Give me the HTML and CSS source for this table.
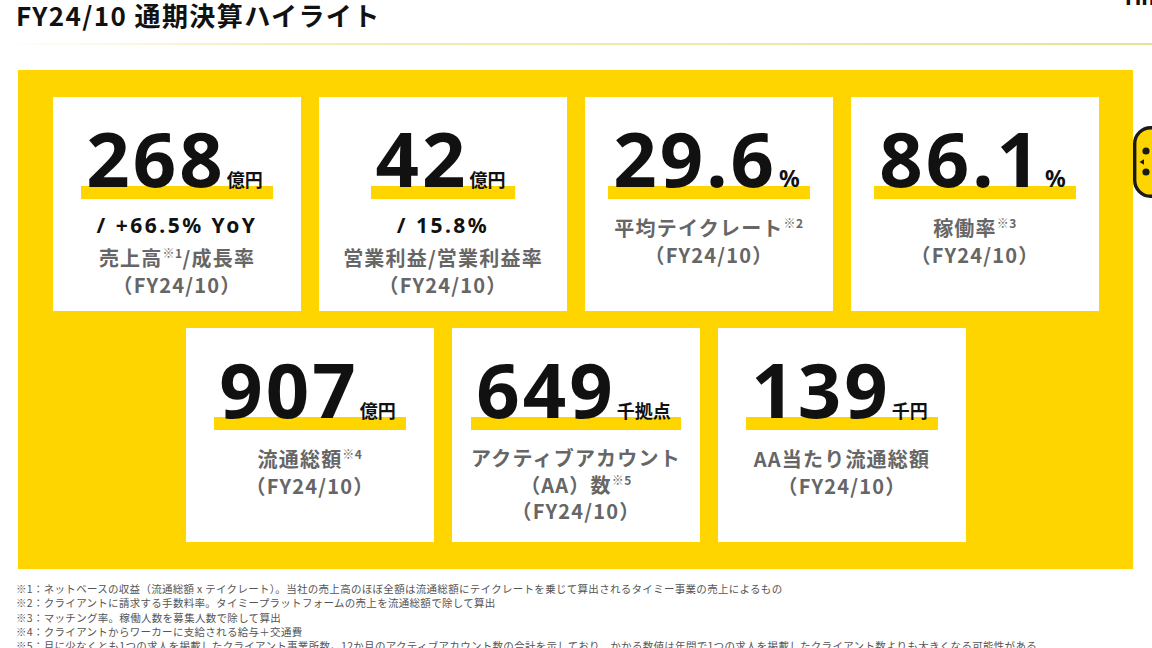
FILE: index.html
```html
<!DOCTYPE html>
<html lang="ja">
<head>
<meta charset="utf-8">
<title>FY24/10 通期決算ハイライト</title>
<link rel="stylesheet" href="styles.css">
</head>
<body>
<header class="header">
  <h1 class="title">FY24/10 通期決算ハイライト</h1>
  <div class="logo">Timee</div>
</header>
<div class="rule"></div>

<main class="panel">
  <div class="row-top">
    <div class="card">
      <div class="figure"><span class="num">268</span><span class="unit">億円</span></div>
      <div class="sub">/ +66.5% YoY</div>
      <div class="desc">売上高<sup class="mark">※1</sup>/成長率</div>
      <div class="desc">（FY24/10）</div>
    </div>
    <div class="card">
      <div class="figure"><span class="num">42</span><span class="unit">億円</span></div>
      <div class="sub">/ 15.8%</div>
      <div class="desc">営業利益/営業利益率</div>
      <div class="desc">（FY24/10）</div>
    </div>
    <div class="card">
      <div class="figure"><span class="num">29.6</span><span class="pct">%</span></div>
      <div class="desc">平均テイクレート<sup class="mark">※2</sup></div>
      <div class="desc">（FY24/10）</div>
    </div>
    <div class="card">
      <div class="figure"><span class="num">86.1</span><span class="pct">%</span></div>
      <div class="desc">稼働率<sup class="mark">※3</sup></div>
      <div class="desc">（FY24/10）</div>
    </div>
  </div>
  <div class="row-bottom">
    <div class="card">
      <div class="figure"><span class="num">907</span><span class="unit">億円</span></div>
      <div class="desc">流通総額<sup class="mark">※4</sup></div>
      <div class="desc">（FY24/10）</div>
    </div>
    <div class="card">
      <div class="figure"><span class="num">649</span><span class="unit">千拠点</span></div>
      <div class="desc tight">アクティブアカウント</div>
      <div class="desc tight">（AA）数<sup class="mark">※5</sup></div>
      <div class="desc tight">（FY24/10）</div>
    </div>
    <div class="card">
      <div class="figure"><span class="num">139</span><span class="unit">千円</span></div>
      <div class="desc">AA当たり流通総額</div>
      <div class="desc">（FY24/10）</div>
    </div>
  </div>
</main>

<footer class="notes">
  <p>※1：ネットベースの収益（流通総額 x テイクレート）。当社の売上高のほぼ全額は流通総額にテイクレートを乗じて算出されるタイミー事業の売上によるもの</p>
  <p>※2：クライアントに請求する手数料率。タイミープラットフォームの売上を流通総額で除して算出</p>
  <p>※3：マッチング率。稼働人数を募集人数で除して算出</p>
  <p>※4：クライアントからワーカーに支給される給与＋交通費</p>
  <p>※5：月に少なくとも1つの求人を掲載したクライアント事業所数。12か月のアクティブアカウント数の合計を示しており、かかる数値は年間で1つの求人を掲載したクライアント数よりも大きくなる可能性がある</p>
</footer>

<svg class="mascot" width="19" height="72" viewBox="0 0 19 72" aria-hidden="true">
  <rect x="1.7" y="1.7" width="40" height="68.6" rx="16" fill="#FFD500" stroke="#1a1a1a" stroke-width="3.4"/>
  <circle cx="13" cy="25" r="3.6" fill="#1a1a1a"/>
  <circle cx="13" cy="46" r="3.6" fill="#1a1a1a"/>
  <path d="M6.5 36 L11 33.2 L11 38.8 Z" fill="#1a1a1a"/>
</svg>
</body>
</html>
```

FILE: styles.css
```css
* { box-sizing: border-box; }

html, body {
  margin: 0;
  padding: 0;
}

body {
  position: relative;
  width: 1152px;
  height: 648px;
  overflow: hidden;
  background: #ffffff;
  font-family: "Noto Sans CJK JP", "Noto Sans", sans-serif;
  color: #111111;
}

.header {
  display: flex;
  justify-content: space-between;
  align-items: flex-start;
  height: 43px;
  padding-left: 16px;
}

.title {
  margin: 0;
  font-size: 26px;
  line-height: 30px;
  font-weight: 700;
  letter-spacing: 1.4px;
  color: #111111;
}

.logo {
  flex-shrink: 0;
  width: 30px;
  margin-top: -15px;
  font-family: "Noto Sans", sans-serif;
  font-weight: 700;
  font-size: 22px;
  line-height: 22px;
  color: #111111;
  white-space: nowrap;
  overflow: hidden;
}

.rule {
  height: 2px;
  background: linear-gradient(90deg, #ffffff 0%, #f4eeb8 25%, #e9e296 100%);
}

.panel {
  margin: 25px 19px 0 18px;
  padding: 27px 34px 27px 35px;
  background: #FFD500;
}

.row-top {
  display: grid;
  grid-template-columns: repeat(4, 248px);
  gap: 18px;
}

.row-bottom {
  display: flex;
  justify-content: center;
  gap: 18px;
  margin-top: 17px;
}

.card {
  width: 248px;
  height: 214px;
  background: #ffffff;
  display: flex;
  flex-direction: column;
  align-items: center;
  text-align: center;
}

.figure {
  display: flex;
  align-items: baseline;
  margin-top: 23px;
  padding: 0 10px 3px 5px;
  line-height: 1;
  background: linear-gradient(to top, #FFD500 13px, transparent 13px);
}

.num {
  font-family: "Noto Sans", "Open Sans", sans-serif;
  font-weight: 700;
  font-size: 76px;
  letter-spacing: 3px;
  color: #111111;
}

.unit {
  font-family: "Noto Sans CJK JP", sans-serif;
  font-weight: 700;
  font-size: 18px;
  margin-left: 1px;
  color: #111111;
}

.pct {
  font-family: "Noto Sans", sans-serif;
  font-weight: 700;
  font-size: 23px;
  margin-left: 2px;
  color: #111111;
}

.sub {
  margin-top: 11px;
  margin-bottom: 4px;
  font-family: "Noto Sans", sans-serif;
  font-weight: 700;
  font-size: 21px;
  line-height: 30px;
  letter-spacing: 2.5px;
  color: #111111;
}

.desc {
  font-weight: 700;
  font-size: 20px;
  line-height: 27px;
  letter-spacing: 1.2px;
  color: #666666;
  white-space: nowrap;
}

.figure + .desc {
  margin-top: 15px;
}

.desc.tight {
  line-height: 26.5px;
}

.mark {
  font-size: 12px;
  letter-spacing: 0.5px;
  vertical-align: 0.65em;
  line-height: 0;
}

.notes {
  margin-top: 13px;
  padding-left: 16px;
  font-size: 10.5px;
  line-height: 14.3px;
  letter-spacing: 0.3px;
  color: #555555;
}

.notes p {
  margin: 0;
  white-space: nowrap;
}

.mascot {
  position: absolute;
  left: 1133px;
  top: 126px;
  overflow: hidden;
}
```
